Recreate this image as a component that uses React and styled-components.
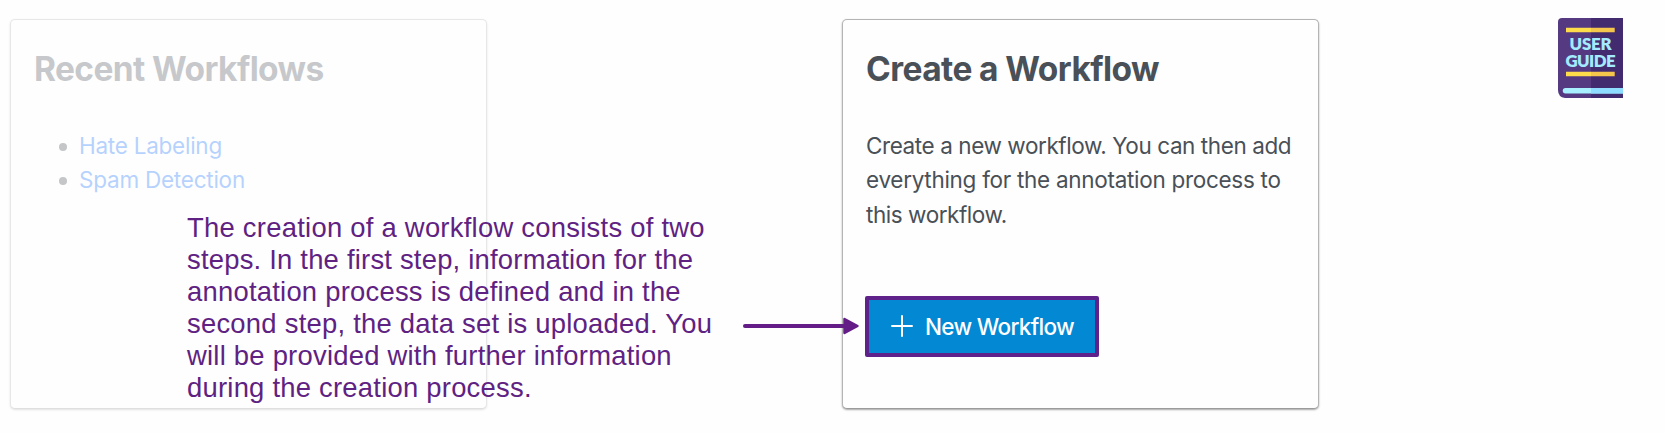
import React from "react";
import styled, { createGlobalStyle } from "styled-components";

const GlobalStyle = createGlobalStyle`
  *, *::before, *::after { box-sizing: border-box; }
  body { margin: 0; background: #fefefe; overflow: hidden; }
`;

const Page = styled.main`
  position: relative;
  display: flex;
  align-items: flex-start;
  width: 1665px;
  height: 433px;
  padding: 18px 42px 0 10px;
  font-family: Inter, "Liberation Sans", sans-serif;
  color: #495057;
`;

const Cards = styled.div`
  display: flex;
  gap: 355px;
  padding-top: 1px;
`;

const Card = styled.section`
  display: flex;
  flex-direction: column;
  flex: none;
  width: 477px;
  height: 390px;
  padding: 27px 23px 0;
  background: #fefefe;
  border: 1px solid #b4b4b4;
  border-bottom-color: #9b9b9b;
  border-radius: 5px;
  box-shadow: 0 1px 2px rgba(0, 0, 0, 0.35);
  opacity: ${({ $faded }) => ($faded ? 0.3 : 1)};
`;

const Title = styled.h1`
  margin: 0 0 38px;
  font-size: 33.5px;
  font-weight: 700;
  line-height: 44px;
  letter-spacing: ${({ $tracking }) => $tracking};
  white-space: nowrap;
`;

const List = styled.ul`
  margin: 0;
  padding-left: 45px;
  list-style: none;
`;

const Item = styled.li`
  display: flex;
  align-items: center;
  height: 34.3px;
  margin-left: -20px;
  gap: 12px;

  &::before {
    content: "";
    width: 8px;
    height: 8px;
    margin-top: 1px;
    border-radius: 50%;
    background: #45484b;
  }
`;

const Link = styled.a`
  padding-bottom: 2px;
  color: #0d6efd;
  font-size: 22.5px;
  letter-spacing: ${({ $tracking }) => $tracking};
  white-space: nowrap;
`;

const Description = styled.p`
  margin: 0;
  font-size: 22.5px;
  line-height: 34.3px;
  white-space: nowrap;
`;

const Line = styled.span`
  display: block;
  letter-spacing: ${({ $tracking }) => $tracking};
`;

const NewButton = styled.button`
  display: flex;
  align-items: center;
  gap: 12px;
  width: 234px;
  height: 61px;
  margin: 64px 0 0 -1px;
  padding: 0 0 0 22px;
  border: 4px solid #5f218a;
  border-radius: 2px;
  background: #0388d3;
  color: #fff;
  font-family: inherit;
  font-size: 22.5px;
  font-weight: 500;
  letter-spacing: -0.69px;
  white-space: nowrap;
`;

const PlusIcon = styled.svg`
  flex: none;
  width: 22px;
  height: 22px;
`;

const Guide = styled.svg`
  flex: none;
  width: 65px;
  height: 80px;
  margin-left: auto;
`;

const Note = styled.p`
  position: absolute;
  left: 187px;
  top: 212px;
  margin: 0;
  color: #5f2282;
  font-family: "Liberation Sans", Arial, sans-serif;
  font-size: 27.4px;
  line-height: 32px;
  white-space: nowrap;
`;

const Arrow = styled.svg`
  position: absolute;
  left: 742px;
  top: 316px;
  width: 118px;
  height: 20px;
`;

export default function App() {
  return (
    <>
      <GlobalStyle />
      <Page>
        <Cards>
          <Card $faded>
            <Title $tracking="-0.6px">Recent Workflows</Title>
            <List>
              <Item><Link $tracking="-0.25px">Hate Labeling</Link></Item>
              <Item><Link $tracking="-0.23px">Spam Detection</Link></Item>
            </List>
          </Card>

          <Card>
            <Title $tracking="-0.58px">Create a Workflow</Title>
            <Description>
              <Line $tracking="-0.42px">Create a new workflow. You can then add</Line>
              <Line $tracking="-0.29px">everything for the annotation process to</Line>
              <Line $tracking="-0.45px">this workflow.</Line>
            </Description>
            <NewButton type="button">
              <PlusIcon viewBox="0 0 22 22" aria-hidden="true">
                <path d="M11 1V21M1 11H21" stroke="#fff" strokeWidth="2" strokeLinecap="round" />
              </PlusIcon>
              New Workflow
            </NewButton>
          </Card>
        </Cards>

        <Guide viewBox="0 0 65 80" role="img" aria-label="User guide">
          <path d="M4 0H33V80H7Q0 79 0 72V4Q0 0 4 0Z" fill="#553a82" />
          <path d="M33 0H65V80H33Z" fill="#432b70" />
          <path d="M8 9.700H33V14.300H8ZM8 53.700H33V58.300H8Z" fill="#ffdc4a" />
          <path d="M33 9.700H56.700V14.300H33ZM33 53.700H56.700V58.300H33Z" fill="#f5c64c" />
          <path d="M7.500 70H65V75.500H7.500A2.750 2.750 0 0 1 7.500 70Z" fill="#a8f0ff" />
          <path d="M33 70H65V75.500H33Z" fill="#8edcff" />
          <g fill="#a3ebff" fontFamily="Lato, sans-serif" fontWeight="800" fontSize="16.8">
            <text x="11.500" y="31.500" textLength="42" lengthAdjust="spacing">USER</text>
            <text x="7.500" y="49" textLength="50" lengthAdjust="spacing">GUIDE</text>
          </g>
        </Guide>

        <Note>
          <Line $tracking="0.26px">The creation of a workflow consists of two</Line>
          <Line $tracking="0.22px">steps. In the first step, information for the</Line>
          <Line $tracking="0.24px">annotation process is defined and in the</Line>
          <Line $tracking="0.25px">second step, the data set is uploaded. You</Line>
          <Line $tracking="0.24px">will be provided with further information</Line>
          <Line $tracking="0.24px">during the creation process.</Line>
        </Note>

        <Arrow viewBox="0 0 118 20" aria-hidden="true">
          <path d="M3 10H102" stroke="#641c86" strokeWidth="4" strokeLinecap="round" />
          <path d="M102.500 3L115.500 10L102.500 17Z" fill="#641c86" stroke="#641c86" strokeWidth="2.500" strokeLinejoin="round" />
        </Arrow>
      </Page>
    </>
  );
}
